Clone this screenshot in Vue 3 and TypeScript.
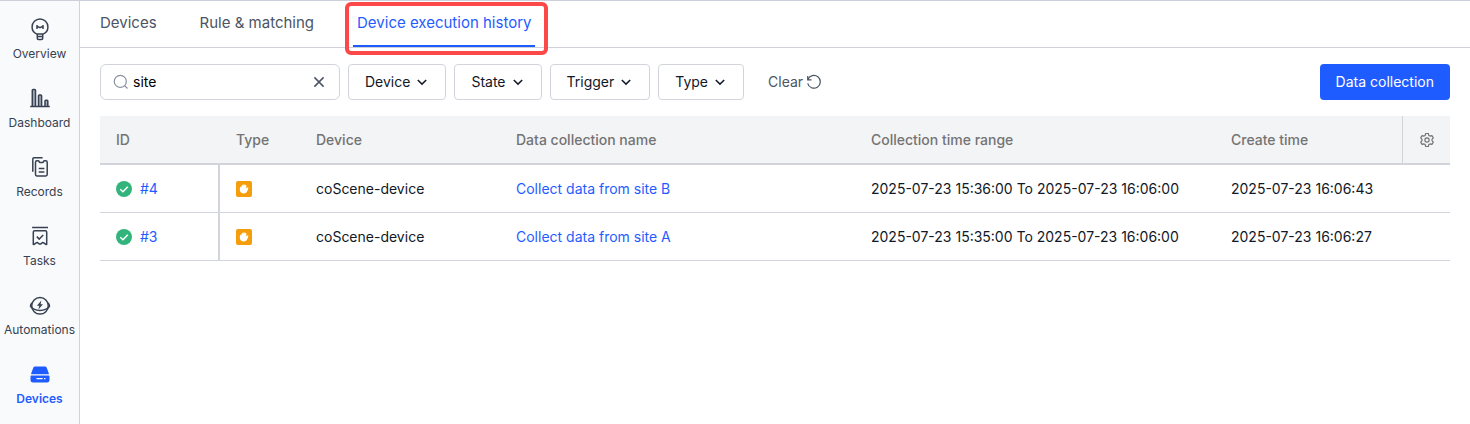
<script setup lang="ts">
import { ref } from 'vue'

interface NavItem {
  name: string
  icon: string
  active?: boolean
}

interface Run {
  id: string
  device: string
  name: string
  range: string
  created: string
}

const navItems: NavItem[] = [
  { name: 'Overview', icon: 'overview' },
  { name: 'Dashboard', icon: 'dashboard' },
  { name: 'Records', icon: 'records' },
  { name: 'Tasks', icon: 'tasks' },
  { name: 'Automations', icon: 'automations' },
  { name: 'Devices', icon: 'devices', active: true },
]

const tabs = ['Devices', 'Rule & matching', 'Device execution history']
const activeTab = ref('Device execution history')
const filters = ['Device', 'State', 'Trigger', 'Type']
const search = ref('site')

const runs: Run[] = [
  {
    id: '#4',
    device: 'coScene-device',
    name: 'Collect data from site B',
    range: '2025-07-23 15:36:00 To 2025-07-23 16:06:00',
    created: '2025-07-23 16:06:43',
  },
  {
    id: '#3',
    device: 'coScene-device',
    name: 'Collect data from site A',
    range: '2025-07-23 15:35:00 To 2025-07-23 16:06:00',
    created: '2025-07-23 16:06:27',
  },
]
</script>

<template>
  <div class="app">
    <nav class="sidebar" aria-label="Project">
      <a
        v-for="item in navItems"
        :key="item.name"
        href="#"
        class="nav-item"
        :class="{ active: item.active }"
      >
        <svg class="nav-icon" viewBox="0 0 24 24" aria-hidden="true">
          <g v-if="item.icon === 'overview'" class="line">
            <path d="M8.6 16.9C5.8 15.6 4.1 12.9 4.1 9.9a7.9 7.9 0 0 1 15.8 0c0 3-1.7 5.7-4.5 7z" />
            <path d="M9.3 17v4.3c0 .7.4 1.1 1.1 1.1h3.2c.7 0 1.1-.4 1.1-1.1V17M9.4 19.5h5.2" />
            <path d="M9 8v4M15 8v4M9 10.6l1.5-.8 1.5.9 1.5-.9 1.5.8" />
          </g>
          <g v-else-if="item.icon === 'dashboard'" class="line">
            <path class="bar" d="M4.3 20V4.2c0-.5.3-.8.8-.8h1.6c.5 0 .8.3.8.8V20M10.5 20V9.8c0-.5.3-.8.8-.8h1.5c.5 0 .8.3.8.8V20M17 20v-5c0-.5.3-.8.8-.8H19c.5 0 .8.3.8.8v5" />
            <path d="M2.2 20.5h19.6" />
          </g>
          <g v-else-if="item.icon === 'records'" class="line">
            <path d="M4.8 16.8V4c0-.8.4-1.3 1.3-1.3h8.5" />
            <path d="M8.9 5.8h1.3c.5 0 .7.3.9.8.2.5.5.8 1 .8h2.4c.5 0 .8-.3 1-.8.2-.5.4-.8.9-.8h1.4c.9 0 1.4.5 1.4 1.4v12.3c0 .9-.5 1.4-1.4 1.4H8.9c-.9 0-1.4-.5-1.4-1.4V7.200c0-.9.5-1.4 1.4-1.4z" />
            <path d="M10.700 13.500h5.700M10.700 17h5.700" />
          </g>
          <g v-else-if="item.icon === 'tasks'" class="line">
            <path d="M4.100 3.500h15.900" />
            <path d="M5.300 20.500V8c0-.9.4-1.300 1.300-1.300h10.800c.9 0 1.300.4 1.300 1.300v12.500c-1.800-.2-2.600-1.900-3.800-1.900-1.100 0-1.700 1.500-2.900 1.500s-1.800-1.500-2.900-1.500c-1.200 0-2 1.700-3.800 1.900z" />
            <path d="M8.800 12.600l2.500 2.500 3.900-4.200" />
          </g>
          <g v-else-if="item.icon === 'automations'" class="line">
            <circle cx="12" cy="12.800" r="8.300" />
            <path d="M4.200 9.800C2.700 11 2 12.100 2.400 13.100c1 2.100 5.100 4.400 9.600 4.400s8.600-2.300 9.600-4.400c.4-1-.3-2.100-1.800-3.300" />
            <path class="solid" d="M13.300 7.600L8.900 12.700h2.400l-.9 3.800 4.600-5.200h-2.400z" />
          </g>
          <g v-else transform="translate(0 1.500)">
            <path class="solid" d="M7.300 3h9.400c1 0 1.700.5 2.100 1.400l2 5.400c.2.600-.1 1-.7 1H3.900c-.6 0-.9-.4-.7-1l2-5.400C5.600 3.500 6.300 3 7.300 3z" />
            <path class="solid" fill-rule="evenodd" d="M3.400 12h17.200c.6 0 .9.300.9.900v3.600c0 1.500-.9 2.400-2.400 2.400H4.900c-1.500 0-2.400-.9-2.400-2.400v-3.600c0-.6.300-.9.900-.9zM8.500 14.400v1.300h6.200v-1.300zm7.500 0v1.300h1.500v-1.300z" />
          </g>
        </svg>
        <span>{{ item.name }}</span>
      </a>
    </nav>

    <main class="content">
      <div class="tabs" role="tablist">
        <button
          v-for="tab in tabs"
          :key="tab"
          type="button"
          role="tab"
          class="tab"
          :class="{ active: tab === activeTab }"
          :aria-selected="tab === activeTab"
          @click="activeTab = tab"
        >
          {{ tab }}
          <span v-if="tab === activeTab" class="highlight" aria-hidden="true"></span>
        </button>
      </div>

      <div class="toolbar">
        <div class="search">
          <svg class="search-icon" viewBox="0 0 16 16" aria-hidden="true">
            <circle cx="7.300" cy="7.400" r="6" />
            <path d="M11.700 11.800l2.800 2.700" />
          </svg>
          <input v-model="search" type="text" aria-label="Search executions" />
          <button type="button" class="clear-input" aria-label="Clear search" @click="search = ''">
            <svg viewBox="0 0 16 16" aria-hidden="true"><path d="M3.400 3.400l9.200 9.200M12.600 3.400l-9.200 9.200" /></svg>
          </button>
        </div>
        <button v-for="filter in filters" :key="filter" type="button" class="filter">
          {{ filter }}
          <svg viewBox="0 0 16 16" aria-hidden="true"><path d="M3.800 6L8 10.100 12.200 6" /></svg>
        </button>
        <button type="button" class="reset">
          Clear
          <svg viewBox="0 0 16 16" aria-hidden="true">
            <path d="M1.700 2v3.800h3.800M1.900 5.600A6.400 6.400 0 1 1 1.700 9.300" />
          </svg>
        </button>
        <button type="button" class="primary">Data collection</button>
      </div>

      <div class="table-wrap">
        <table>
          <colgroup>
            <col class="col-id" />
            <col class="col-type" />
            <col class="col-device" />
            <col />
            <col class="col-range" />
            <col class="col-created" />
            <col class="col-settings" />
          </colgroup>
          <thead>
            <tr>
              <th scope="col">ID</th>
              <th scope="col">Type</th>
              <th scope="col">Device</th>
              <th scope="col">Data collection name</th>
              <th scope="col">Collection time range</th>
              <th scope="col">Create time</th>
              <th scope="col" class="settings">
                <button type="button" aria-label="Column settings">
                  <svg viewBox="0 0 16 16" aria-hidden="true">
                    <path d="M6.700 1.500h2.600l.5 1.900 1.200.7 1.900-.5 1.400 2.300L13 7.300v1.400l1.300 1.400-1.400 2.300-1.900-.5-1.200.7-.5 1.900H6.700l-.5-1.900-1.200-.7-1.900.5-1.400-2.300L3 8.700V7.300L1.700 5.900l1.400-2.300 1.900.5 1.200-.7z" />
                    <circle cx="8" cy="8" r="2.100" />
                  </svg>
                </button>
              </th>
            </tr>
          </thead>
          <tbody>
            <tr v-for="run in runs" :key="run.id">
              <td class="id-cell">
                <div class="run-id">
                  <svg viewBox="0 0 16 16" role="img" aria-label="Succeeded">
                    <circle cx="8" cy="8" r="8" fill="#34b47d" />
                    <path d="M4.300 8.200l2.600 2.500 4.900-4.900" fill="none" stroke="#fff" stroke-width="1.500" />
                  </svg>
                  <a href="#">{{ run.id }}</a>
                </div>
              </td>
              <td>
                <svg class="type-icon" viewBox="0 0 16 16" role="img" aria-label="Manual">
                  <rect width="16" height="16" rx="2" fill="#f59e0b" />
                  <path
                    fill="#fff"
                    d="M4.500 5.700c.4-.3.900-.1 1.300.3V4.400c0-.9 1.100-.9 1.300 0l.2.600V3.800c0-.9 1.300-.9 1.400 0V5l.3-.7c.3-.7 1.300-.5 1.300.3v2.800c.5-.7 1.400-1 2.100-.6-.2 1.100-.5 1.900-.9 2.800-.6 1.900-1.900 2.900-3.700 2.900-2.300 0-4-1.500-4-3.700 0-1.400.2-2.600.7-3.100z"
                  />
                </svg>
              </td>
              <td>{{ run.device }}</td>
              <td><a href="#">{{ run.name }}</a></td>
              <td>{{ run.range }}</td>
              <td colspan="2">{{ run.created }}</td>
            </tr>
          </tbody>
        </table>
      </div>
    </main>
  </div>
</template>

<style>
body {
  margin: 0;
  background: #fff;
}
</style>

<style scoped>
.app {
  box-sizing: border-box;
  display: flex;
  min-height: 100vh;
  border-top: 1px solid #cbd0dc;
  color: #111827;
  font-family: Inter, "Liberation Sans", sans-serif;
  font-size: 14px;
  line-height: 20px;
}

button {
  margin: 0;
  padding: 0;
  border: 0;
  background: none;
  color: inherit;
  font: inherit;
  cursor: pointer;
}

a {
  color: #1f5cff;
  text-decoration: none;
}

svg {
  display: block;
  flex: none;
}

.sidebar {
  box-sizing: border-box;
  display: flex;
  flex: none;
  flex-direction: column;
  gap: 22px;
  width: 80px;
  padding-top: 16px;
  border-right: 1px solid #cfd2db;
  background: #f9fafb;
}

.nav-item {
  display: flex;
  flex-direction: column;
  align-items: center;
  gap: 3px;
  color: #374151;
  font-size: 12px;
  white-space: nowrap;
}

.nav-item.active {
  color: #1f5cff;
  font-weight: 600;
}

.nav-icon {
  width: 24px;
  height: 24px;
}

.line {
  fill: none;
  stroke: currentColor;
  stroke-width: 1.500;
  stroke-linejoin: round;
}

.bar {
  fill: #a3abb9;
}

.solid {
  fill: currentColor;
  stroke: none;
}

.content {
  flex: 1;
  min-width: 0;
}

.tabs {
  display: flex;
  gap: 35px;
  height: 46px;
  padding: 0 16px;
  border-bottom: 1px solid #cfd2db;
}

.tab {
  position: relative;
  box-sizing: border-box;
  padding: 0 4px;
  border-bottom: 2px solid transparent;
  color: #4b5563;
  font-size: 15px;
  white-space: nowrap;
}

.tab.active {
  border-bottom-color: #1f5cff;
  color: #1f5cff;
}

.highlight {
  position: absolute;
  inset: 1px -13px -10px -8px;
  border: 4px solid #fb4848;
  border-radius: 6px;
  pointer-events: none;
}

.toolbar {
  display: flex;
  gap: 8px;
  padding: 16px 20px;
}

.search {
  box-sizing: border-box;
  display: flex;
  align-items: center;
  gap: 4px;
  width: 240px;
  height: 36px;
  padding: 0 12px;
  border: 1px solid #d1d5db;
  border-radius: 6px;
}

.search input {
  flex: 1;
  min-width: 0;
  padding: 0;
  border: 0;
  outline: 0;
  background: none;
  color: #000;
  font: inherit;
}

.toolbar svg {
  width: 16px;
  height: 16px;
  fill: none;
  stroke: currentColor;
  stroke-width: 1.500;
}

.toolbar .search-icon {
  color: #8b93a1;
  stroke-width: 1.200;
}

.clear-input {
  color: #4b5563;
}

.filter,
.reset,
.primary {
  box-sizing: border-box;
  display: flex;
  align-items: center;
  height: 36px;
  padding: 0 15px;
  border: 1px solid transparent;
  border-radius: 4px;
  white-space: nowrap;
}

.filter {
  gap: 4px;
  padding: 0 15px 0 16px;
  border-color: #d1d5db;
}

.reset {
  gap: 3px;
  color: #4b5563;
}

.toolbar .reset svg {
  stroke-width: 1.200;
}

.primary {
  margin-left: auto;
  background: #1f5cff;
  color: #fff;
}

.table-wrap {
  padding: 0 20px;
}

table {
  width: 100%;
  border-collapse: separate;
  border-spacing: 0;
  table-layout: fixed;
}

.col-id {
  width: 120px;
}

.col-type {
  width: 80px;
}

.col-device {
  width: 200px;
}

.col-range {
  width: 360px;
}

.col-created {
  width: 187px;
}

.col-settings {
  width: 48px;
}

th,
td {
  box-sizing: border-box;
  padding: 0 16px;
  text-align: left;
  white-space: nowrap;
}

th {
  height: 49px;
  border-bottom: 2px solid #d1d5db;
  background: #f3f4f6;
  color: #737373;
  font-weight: 500;
}

td {
  height: 48px;
  border-bottom: 1px solid #d1d5db;
}

.id-cell {
  border-right: 2px solid #d1d5db;
}

.run-id {
  display: flex;
  align-items: center;
  gap: 8px;
}

.run-id svg,
.type-icon {
  width: 16px;
  height: 16px;
}

.settings {
  border-left: 1px solid #d1d5db;
}

.settings button {
  display: block;
}

.settings svg {
  width: 16px;
  height: 16px;
  fill: none;
  stroke: currentColor;
  stroke-width: 1.200;
  stroke-linejoin: round;
}
</style>
